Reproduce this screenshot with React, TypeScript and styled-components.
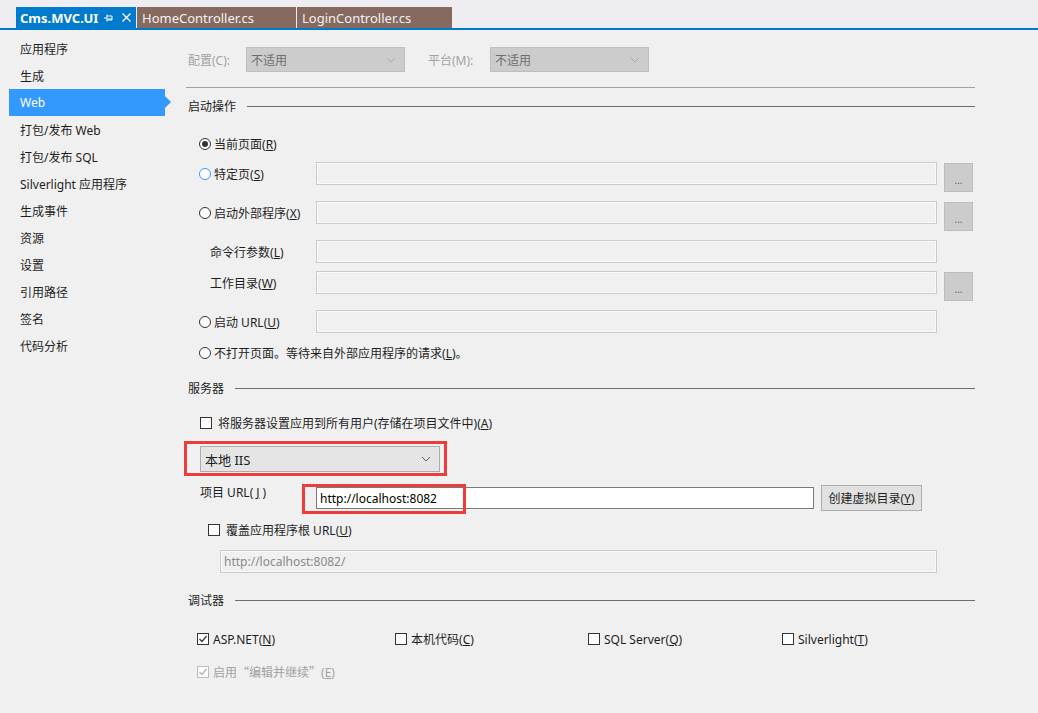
import React from 'react';
import styled, { createGlobalStyle } from 'styled-components';

/**
 * Global
 */
const GlobalStyle = createGlobalStyle`
    html, body {
        margin: 0;
        padding: 0;
        background: #f0f0f0;
    }

    body {
        font-family: "Segoe UI", "Noto Sans", "Noto Sans CJK SC", sans-serif;
        font-size: 12px;
        color: #1e1e1e;
    }
`;

/**
 * Styled Components
 */
const Window = styled.div`
    width: 1038px;
    height: 713px;
    overflow: hidden;
    display: flex;
    flex-direction: column;
    background: #f0f0f0;
`;

const TabStrip = styled.div`
    height: 28px;
    flex-shrink: 0;
    display: flex;
    align-items: flex-end;
    gap: 1px;
    padding-left: 16px;
    background: #eeeef2;
    border-bottom: 2px solid #007acc;
`;

const Tab = styled.div<{ $active?: boolean; $width: number }>`
    width: ${(p) => p.$width}px;
    height: 21px;
    box-sizing: border-box;
    display: flex;
    align-items: center;
    padding-left: ${(p) => (p.$active ? 4 : 5)}px;
    background: ${(p) => (p.$active ? '#007acc' : '#86695f')};
    color: ${(p) => (p.$active ? '#ffffff' : '#f2f2f2')};
    font-size: 13px;
    font-weight: ${(p) => (p.$active ? 700 : 400)};
    white-space: nowrap;
`;

const TabTitle = styled.span`
    flex: 1;
`;

const TabIcons = styled.span`
    display: flex;
    align-items: center;
    gap: 9px;
    margin-right: 5px;
`;

const Body = styled.div`
    flex: 1;
    display: flex;
`;

const Sidebar = styled.div`
    width: 186px;
    flex-shrink: 0;
    padding-top: 5px;
    box-sizing: border-box;
`;

const NavItem = styled.div<{ $selected?: boolean }>`
    position: relative;
    width: 156px;
    height: 27px;
    margin-left: 9px;
    padding-left: 11px;
    box-sizing: border-box;
    display: flex;
    align-items: center;
    background: ${(p) => (p.$selected ? '#3399ff' : 'transparent')};
    color: ${(p) => (p.$selected ? '#ffffff' : '#1e1e1e')};

    &::after {
        content: '';
        display: ${(p) => (p.$selected ? 'block' : 'none')};
        position: absolute;
        right: -6px;
        top: 7px;
        border-left: 6px solid #3399ff;
        border-top: 6px solid transparent;
        border-bottom: 6px solid transparent;
    }
`;

const Main = styled.div`
    width: 789px;
    display: flex;
    flex-direction: column;
`;

const ConfigRow = styled.div`
    margin-top: 17px;
    height: 25px;
    display: flex;
    align-items: center;
    padding-left: 2px;
`;

const DimLabel = styled.span<{ $width: number; $gap?: number }>`
    width: ${(p) => p.$width}px;
    margin-left: ${(p) => p.$gap ?? 0}px;
    color: #a2a2a2;
`;

const ComboBox = styled.div<{ $width: number; $disabled?: boolean }>`
    width: ${(p) => p.$width}px;
    height: ${(p) => (p.$disabled ? 25 : 26)}px;
    box-sizing: border-box;
    display: flex;
    align-items: center;
    justify-content: space-between;
    padding: 0 8px 0 4px;
    background: ${(p) => (p.$disabled ? '#cccccc' : '#e5e5e5')};
    border: 1px solid ${(p) => (p.$disabled ? '#bfbfbf' : '#acacac')};
    color: ${(p) => (p.$disabled ? '#6d6d6d' : '#1e1e1e')};
    font-size: ${(p) => (p.$disabled ? 12 : 13)}px;
`;

const Divider = styled.div`
    margin-top: 15px;
    height: 1px;
    background: #a0a0a0;
`;

const SectionHeader = styled.div<{ $top: number }>`
    margin-top: ${(p) => p.$top}px;
    height: 16px;
    display: flex;
    align-items: center;
    gap: 11px;
    padding-left: 2px;

    &::after {
        content: '';
        flex: 1;
        height: 1px;
        background: #6e6e6e;
    }
`;

const FieldRow = styled.div<{ $top: number; $height?: number }>`
    margin-top: ${(p) => p.$top}px;
    height: ${(p) => p.$height ?? 23}px;
    display: flex;
    align-items: center;
`;

const FieldLabel = styled.div<{ $indent: number }>`
    width: 130px;
    box-sizing: border-box;
    padding-left: ${(p) => p.$indent}px;
    display: flex;
    align-items: center;
    gap: 3px;
    white-space: nowrap;
`;

const EmptyBox = styled.div<{ $width: number }>`
    width: ${(p) => p.$width}px;
    height: 23px;
    box-sizing: border-box;
    border: 1px solid #cacaca;
    box-shadow: inset 0 0 0 1px #fafafa;
    background: #f0f0f0;
    display: flex;
    align-items: center;
    padding-left: 3px;
    color: #8a8a8a;
`;

const BrowseButton = styled.div`
    width: 29px;
    height: 29px;
    margin-left: 7px;
    align-self: flex-start;
    margin-top: 1px;
    box-sizing: border-box;
    border: 1px solid #bdbdbd;
    background: #cccccc;
    color: #666;
    font-size: 10px;
    display: flex;
    align-items: center;
    justify-content: center;
    padding-top: 4px;
`;

const Radio = styled.span<{ $checked?: boolean; $focus?: boolean }>`
    width: 12px;
    height: 12px;
    box-sizing: border-box;
    border-radius: 50%;
    border: 1px solid ${(p) => (p.$focus ? '#3399ff' : '#333333')};
    background: #ffffff;
    display: inline-flex;
    align-items: center;
    justify-content: center;
    flex-shrink: 0;

    &::after {
        content: '';
        display: ${(p) => (p.$checked ? 'block' : 'none')};
        width: 6px;
        height: 6px;
        border-radius: 50%;
        background: #333333;
    }
`;

const Box = styled.span<{ $disabled?: boolean }>`
    width: 12px;
    height: 12px;
    box-sizing: border-box;
    border: 1px solid ${(p) => (p.$disabled ? '#bcbcbc' : '#333333')};
    background: #ffffff;
    display: inline-flex;
    align-items: center;
    justify-content: center;
    flex-shrink: 0;
`;

const CheckLine = styled.div<{ $top: number; $indent: number; $gap?: number; $dim?: boolean }>`
    margin-top: ${(p) => p.$top}px;
    height: 16px;
    padding-left: ${(p) => p.$indent}px;
    display: flex;
    align-items: center;
    gap: ${(p) => p.$gap ?? 6}px;
    color: ${(p) => (p.$dim ? '#a2a2a2' : '#1e1e1e')};
    white-space: nowrap;
`;

const CjkQuote = styled.span`
    font-family: "Noto Sans CJK SC", sans-serif;
`;

const DebugGrid = styled.div`
    margin-top: 22px;
    height: 16px;
    padding-left: 11px;
    display: grid;
    grid-template-columns: 198px 193px 194px auto;
    align-items: center;
`;

const DebugItem = styled.div`
    display: flex;
    align-items: center;
    gap: 4px;
    white-space: nowrap;
`;

const Annotated = styled.div`
    position: relative;
`;

const RedFrame = styled.div<{ $l: number; $t: number; $w: number; $h: number }>`
    position: absolute;
    left: ${(p) => p.$l}px;
    top: ${(p) => p.$t}px;
    width: ${(p) => p.$w}px;
    height: ${(p) => p.$h}px;
    box-sizing: border-box;
    border: 3px solid #ee3b3b;
    pointer-events: none;
`;

const SelectWrap = styled(Annotated)`
    margin-top: 15px;
    margin-left: 14px;
    width: 240px;
`;

const UrlRow = styled.div`
    margin-top: 13px;
    height: 26px;
    display: flex;
    align-items: flex-start;
    padding-left: 14px;
`;

const UrlLabel = styled.div`
    width: 116px;
    line-height: 16px;
    display: flex;
    gap: 3px;
    white-space: nowrap;
`;

const UrlField = styled(Annotated)`
    padding-top: 2px;
`;

const UrlInput = styled.div`
    width: 498px;
    height: 22px;
    box-sizing: border-box;
    border: 1px solid #7a7a7a;
    background: #ffffff;
    display: flex;
    align-items: center;
    padding-left: 3px;
    color: #000;
`;

const PlainButton = styled.div`
    margin-left: 7px;
    width: 101px;
    height: 26px;
    box-sizing: border-box;
    border: 1px solid #adadad;
    background: #e1e1e1;
    display: flex;
    align-items: center;
    justify-content: center;
    white-space: nowrap;
`;

const RootUrlBox = styled(EmptyBox)`
    margin-top: 12px;
    margin-left: 34px;
`;

/**
 * Icons
 */
const Chevron = ({ color }: { color: string }) => (
    <svg width="10" height="6" viewBox="0 0 10 6">
        <path d="M1 1 L5 5 L9 1" fill="none" stroke={color} strokeWidth="1" />
    </svg>
);

const Tick = ({ color }: { color: string }) => (
    <svg width="10" height="10" viewBox="0 0 10 10">
        <path d="M1.5 5 L4 7.5 L8.5 2" fill="none" stroke={color} strokeWidth="1.2" />
    </svg>
);

const PinIcon = () => (
    <svg width="9" height="8" viewBox="0 0 9 8">
        <path d="M0 4 H3 M3 0.5 V7.5 M3 2 H8 V6 H3 M4 5 H8" fill="none" stroke="#ffffff" strokeWidth="1" />
    </svg>
);

const CloseIcon = () => (
    <svg width="9" height="9" viewBox="0 0 9 9">
        <path d="M0.5 0.5 L8.5 8.5 M8.5 0.5 L0.5 8.5" stroke="#ffffff" strokeWidth="1.3" />
    </svg>
);

/**
 * Helpers
 */
const Key = ({ k }: { k: string }) => (
    <>(<u>{k}</u>)</>
);

const navItems = [
    '应用程序',
    '生成',
    'Web',
    '打包/发布 Web',
    '打包/发布 SQL',
    'Silverlight 应用程序',
    '生成事件',
    '资源',
    '设置',
    '引用路径',
    '签名',
    '代码分析',
];

/**
 * Main Component
 */
const App = () => {
    return (
        <Window>
            <GlobalStyle />
            <TabStrip>
                <Tab $active $width={120}>
                    <TabTitle>Cms.MVC.UI</TabTitle>
                    <TabIcons>
                        <PinIcon />
                        <CloseIcon />
                    </TabIcons>
                </Tab>
                <Tab $width={159}>HomeController.cs</Tab>
                <Tab $width={155}>LoginController.cs</Tab>
            </TabStrip>

            <Body>
                <Sidebar>
                    {navItems.map((item) => (
                        <NavItem key={item} $selected={item === 'Web'}>
                            {item}
                        </NavItem>
                    ))}
                </Sidebar>

                <Main>
                    <ConfigRow>
                        <DimLabel $width={58}>配置(C):</DimLabel>
                        <ComboBox $width={159} $disabled>
                            不适用
                            <Chevron color="#a8a8a8" />
                        </ComboBox>
                        <DimLabel $width={62} $gap={23}>平台(M):</DimLabel>
                        <ComboBox $width={159} $disabled>
                            不适用
                            <Chevron color="#a8a8a8" />
                        </ComboBox>
                    </ConfigRow>
                    <Divider />

                    <SectionHeader $top={10}>启动操作</SectionHeader>

                    <FieldRow $top={18}>
                        <FieldLabel $indent={13}>
                            <Radio $checked />
                            <span>当前页面<Key k="R" /></span>
                        </FieldLabel>
                    </FieldRow>
                    <FieldRow $top={7}>
                        <FieldLabel $indent={13}>
                            <Radio $focus />
                            <span>特定页<Key k="S" /></span>
                        </FieldLabel>
                        <EmptyBox $width={621} />
                        <BrowseButton>...</BrowseButton>
                    </FieldRow>
                    <FieldRow $top={16}>
                        <FieldLabel $indent={13}>
                            <Radio />
                            <span>启动外部程序<Key k="X" /></span>
                        </FieldLabel>
                        <EmptyBox $width={621} />
                        <BrowseButton>...</BrowseButton>
                    </FieldRow>
                    <FieldRow $top={16}>
                        <FieldLabel $indent={24}>
                            <span>命令行参数<Key k="L" /></span>
                        </FieldLabel>
                        <EmptyBox $width={621} />
                    </FieldRow>
                    <FieldRow $top={8}>
                        <FieldLabel $indent={24}>
                            <span>工作目录<Key k="W" /></span>
                        </FieldLabel>
                        <EmptyBox $width={621} />
                        <BrowseButton>...</BrowseButton>
                    </FieldRow>
                    <FieldRow $top={16}>
                        <FieldLabel $indent={13}>
                            <Radio />
                            <span>启动 URL<Key k="U" /></span>
                        </FieldLabel>
                        <EmptyBox $width={621} />
                    </FieldRow>
                    <FieldRow $top={8}>
                        <FieldLabel $indent={13}>
                            <Radio />
                            <span>不打开页面。等待来自外部应用程序的请求<Key k="L" />。</span>
                        </FieldLabel>
                    </FieldRow>

                    <SectionHeader $top={16}>服务器</SectionHeader>

                    <CheckLine $top={19} $indent={14}>
                        <Box />
                        <span>将服务器设置应用到所有用户(存储在项目文件中)<Key k="A" /></span>
                    </CheckLine>

                    <SelectWrap>
                        <ComboBox $width={240}>
                            本地 IIS
                            <Chevron color="#606060" />
                        </ComboBox>
                        <RedFrame $l={-16} $t={-5} $w={263} $h={35} />
                    </SelectWrap>

                    <UrlRow>
                        <UrlLabel>项目 URL<Key k="J" /></UrlLabel>
                        <UrlField>
                            <UrlInput>http://localhost:8082</UrlInput>
                            <RedFrame $l={-14} $t={-1} $w={164} $h={30} />
                        </UrlField>
                        <PlainButton>创建虚拟目录<Key k="Y" /></PlainButton>
                    </UrlRow>

                    <CheckLine $top={11} $indent={22}>
                        <Box />
                        <span>覆盖应用程序根 URL<Key k="U" /></span>
                    </CheckLine>
                    <RootUrlBox $width={717}>http://localhost:8082/</RootUrlBox>

                    <SectionHeader $top={19}>调试器</SectionHeader>

                    <DebugGrid>
                        <DebugItem>
                            <Box><Tick color="#333333" /></Box>
                            <span>ASP.NET<Key k="N" /></span>
                        </DebugItem>
                        <DebugItem>
                            <Box />
                            <span>本机代码<Key k="C" /></span>
                        </DebugItem>
                        <DebugItem>
                            <Box />
                            <span>SQL Server<Key k="Q" /></span>
                        </DebugItem>
                        <DebugItem>
                            <Box />
                            <span>Silverlight<Key k="T" /></span>
                        </DebugItem>
                    </DebugGrid>

                    <CheckLine $top={18} $indent={11} $gap={4} $dim>
                        <Box $disabled><Tick color="#b0b0b0" /></Box>
                        <span>启用<CjkQuote>“编辑并继续”</CjkQuote><Key k="E" /></span>
                    </CheckLine>
                </Main>
            </Body>
        </Window>
    );
};

export default App;
